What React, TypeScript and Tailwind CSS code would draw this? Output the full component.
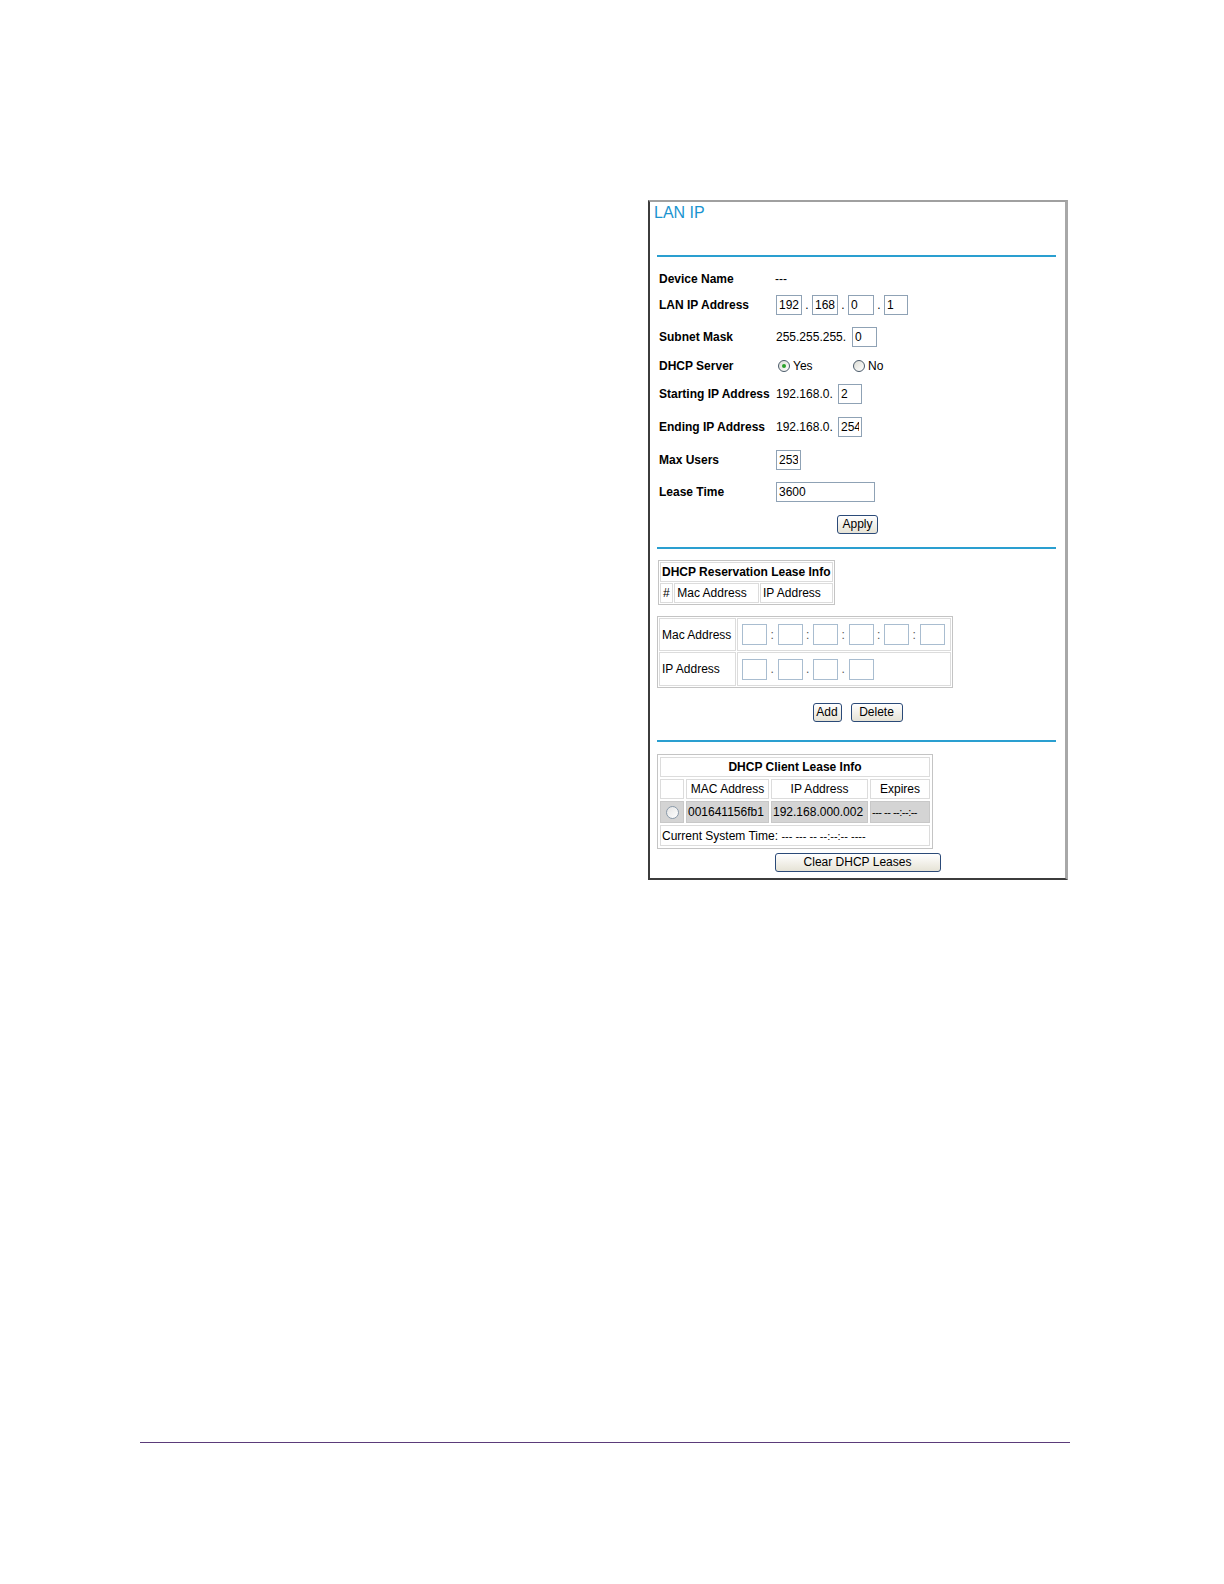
import React from 'react';

// classic router admin page: "LAN IP" settings frame on a manual page

const inputCls =
  'h-[20px] border border-[#8fa2b5] bg-white px-[2px] text-[12px] leading-[18px] text-black outline-none';

function Row({ label, h, children }: { label: string; h: string; children?: React.ReactNode }) {
  return (
    <div className={`flex shrink-0 items-center ${h}`}>
      <div className="w-[117px] shrink-0 whitespace-nowrap text-[12px] font-bold text-black">{label}</div>
      <div className="flex items-center text-[12px] text-black">{children}</div>
    </div>
  );
}

function XpButton({ label, w }: { label: string; w: string }) {
  return (
    <button
      className={`${w} h-[19px] rounded-[3px] border border-[#2b4a78] bg-gradient-to-b from-white to-[#e6e3d6] text-[12px] leading-[17px] text-black`}
    >
      {label}
    </button>
  );
}

function Radio({ checked }: { checked?: boolean }) {
  return (
    <span className="flex h-[12px] w-[12px] items-center justify-center rounded-full border border-[#4a5a6a] bg-gradient-to-br from-[#dcdcd4] to-white">
      {checked && <span className="h-[4px] w-[4px] rounded-full bg-[#2aa12a]" />}
    </span>
  );
}

function Rule({ mt }: { mt: string }) {
  return <div className={`${mt} ml-[7px] h-[2px] w-[399px] shrink-0 bg-[#2a9fd0]`} />;
}

const Dot = ({ c }: { c: string }) => (
  <span className="w-[10.5px] text-center text-[12px] text-[#555]">{c}</span>
);

const BoxInput = () => <input className="h-[21px] w-[25px] border border-[#a9bdd0] bg-white outline-none" />;

export default function App() {
  return (
    <div className="flex h-[1584px] w-[1224px] flex-col bg-white pt-[200px] font-['Liberation_Sans',Arial,sans-serif]">
      <div className="ml-[648px] flex h-[680px] w-[420px] shrink-0 flex-col overflow-hidden border-b-2 border-l-2 border-r-[3px] border-t-2 border-b-[#3c3c3c] border-l-[#3c3c3c] border-r-[#a8a8a8] border-t-[#a0a0a0]">
        <div className="shrink-0 pl-[4px] pt-[2px] text-[16px] leading-[18px] text-[#1a94d0]">LAN IP</div>
        <Rule mt="mt-[33px]" />

        <div className="ml-[9px] mt-[11px] flex shrink-0 flex-col">
          <Row label="Device Name" h="h-[22px]">
            <span className="-ml-[1px]">---</span>
          </Row>
          <Row label="LAN IP Address" h="h-[30px]">
            <input className={`${inputCls} w-[26px]`} defaultValue="192" />
            <span className="w-[10px] text-center">.</span>
            <input className={`${inputCls} w-[26px]`} defaultValue="168" />
            <span className="w-[10px] text-center">.</span>
            <input className={`${inputCls} w-[26px]`} defaultValue="0" />
            <span className="w-[10px] text-center">.</span>
            <input className={`${inputCls} w-[24px]`} defaultValue="1" />
          </Row>
          <Row label="Subnet Mask" h="h-[34px]">
            <span className="w-[76px]">255.255.255.</span>
            <input className={`${inputCls} w-[25px]`} defaultValue="0" />
          </Row>
          <Row label="DHCP Server" h="h-[24px]">
            <span className="ml-[2px] flex w-[75px] items-center gap-[3px]">
              <Radio checked />
              Yes
            </span>
            <span className="flex items-center gap-[3px]">
              <Radio />
              No
            </span>
          </Row>
          <Row label="Starting IP Address" h="h-[32px]">
            <span className="w-[62px]">192.168.0.</span>
            <input className={`${inputCls} w-[24px]`} defaultValue="2" />
          </Row>
          <Row label="Ending IP Address" h="h-[34px]">
            <span className="w-[62px]">192.168.0.</span>
            <input className={`${inputCls} w-[24px]`} defaultValue="254" />
          </Row>
          <Row label="Max Users" h="h-[32px]">
            <input className={`${inputCls} w-[25px]`} defaultValue="253" />
          </Row>
          <Row label="Lease Time" h="h-[32px]">
            <input className={`${inputCls} w-[99px]`} defaultValue="3600" />
          </Row>
        </div>

        <div className="flex h-[33px] shrink-0 items-center justify-center">
          <XpButton label="Apply" w="w-[41px]" />
        </div>

        <Rule mt="mt-[6px]" />

        <table className="ml-[8px] mt-[11px] shrink-0 self-start border-separate border-spacing-[1px] border border-[#c4c4c4] text-[12px] text-black">
          <tbody>
            <tr>
              <th colSpan={3} className="h-[20px] whitespace-nowrap border border-[#dcdcdc] px-[1px] text-left font-bold">
                DHCP Reservation Lease Info
              </th>
            </tr>
            <tr>
              <td className="h-[20px] w-[13px] border border-[#dcdcdc] px-[2px]">#</td>
              <td className="h-[20px] w-[83px] whitespace-nowrap border border-[#dcdcdc] px-[2px]">Mac Address</td>
              <td className="h-[20px] w-[71px] whitespace-nowrap border border-[#dcdcdc] px-[2px]">IP Address</td>
            </tr>
          </tbody>
        </table>

        <table className="ml-[7px] mt-[11px] w-[296px] shrink-0 self-start border-separate border-spacing-[1px] border border-[#c4c4c4] text-[12px] text-black">
          <tbody>
            <tr>
              <td className="h-[33px] w-[77px] whitespace-nowrap border border-[#dcdcdc] px-[2px]">Mac Address</td>
              <td className="h-[33px] border border-[#dcdcdc] pl-[4px]">
                <div className="flex items-center">
                  <BoxInput />
                  <Dot c=":" />
                  <BoxInput />
                  <Dot c=":" />
                  <BoxInput />
                  <Dot c=":" />
                  <BoxInput />
                  <Dot c=":" />
                  <BoxInput />
                  <Dot c=":" />
                  <BoxInput />
                </div>
              </td>
            </tr>
            <tr>
              <td className="h-[34px] border border-[#dcdcdc] px-[2px]">IP Address</td>
              <td className="h-[34px] border border-[#dcdcdc] pl-[4px]">
                <div className="flex items-center">
                  <BoxInput />
                  <Dot c="." />
                  <BoxInput />
                  <Dot c="." />
                  <BoxInput />
                  <Dot c="." />
                  <BoxInput />
                </div>
              </td>
            </tr>
          </tbody>
        </table>

        <div className="mt-[15px] flex shrink-0 justify-center gap-[9px]">
          <XpButton label="Add" w="w-[29px]" />
          <XpButton label="Delete" w="w-[52px]" />
        </div>

        <Rule mt="mt-[18px]" />

        <table className="ml-[7px] mt-[12px] shrink-0 self-start border-separate border-spacing-[2px] border border-[#c4c4c4] text-[12px] text-black">
          <tbody>
            <tr>
              <th colSpan={4} className="h-[19px] border border-[#dcdcdc] text-center font-bold">
                DHCP Client Lease Info
              </th>
            </tr>
            <tr>
              <td className="h-[19px] w-[24px] border border-[#dcdcdc]" />
              <td className="h-[19px] w-[83px] border border-[#dcdcdc] text-center">MAC Address</td>
              <td className="h-[19px] w-[97px] border border-[#dcdcdc] text-center">IP Address</td>
              <td className="h-[19px] w-[60px] border border-[#dcdcdc] text-center">Expires</td>
            </tr>
            <tr>
              <td className="h-[22px] border border-[#c8c8c8] bg-[#d4d4d4]">
                <div className="flex justify-center">
                  <span className="h-[13px] w-[13px] rounded-full border border-[#8a9aaa] bg-gradient-to-br from-[#e4e4e4] to-white" />
                </div>
              </td>
              <td className="h-[22px] border border-[#c8c8c8] bg-[#d4d4d4] px-[1px]">001641156fb1</td>
              <td className="h-[22px] border border-[#c8c8c8] bg-[#d4d4d4] px-[1px]">192.168.000.002</td>
              <td className="h-[22px] whitespace-nowrap border border-[#c8c8c8] bg-[#d4d4d4] px-[1px] text-[11px] tracking-[-0.5px]">
                --- -- --:--:--
              </td>
            </tr>
            <tr>
              <td colSpan={4} className="h-[21px] border border-[#dcdcdc] px-[1px]">
                Current System Time: <span className="text-[11px]">--- --- -- --:--:-- ----</span>
              </td>
            </tr>
          </tbody>
        </table>

        <div className="mt-[4px] flex shrink-0 justify-center">
          <XpButton label="Clear DHCP Leases" w="w-[166px]" />
        </div>
      </div>

      <div className="ml-[140px] mt-[562px] h-px w-[930px] shrink-0 bg-[#5b3b7a]" />
    </div>
  );
}
